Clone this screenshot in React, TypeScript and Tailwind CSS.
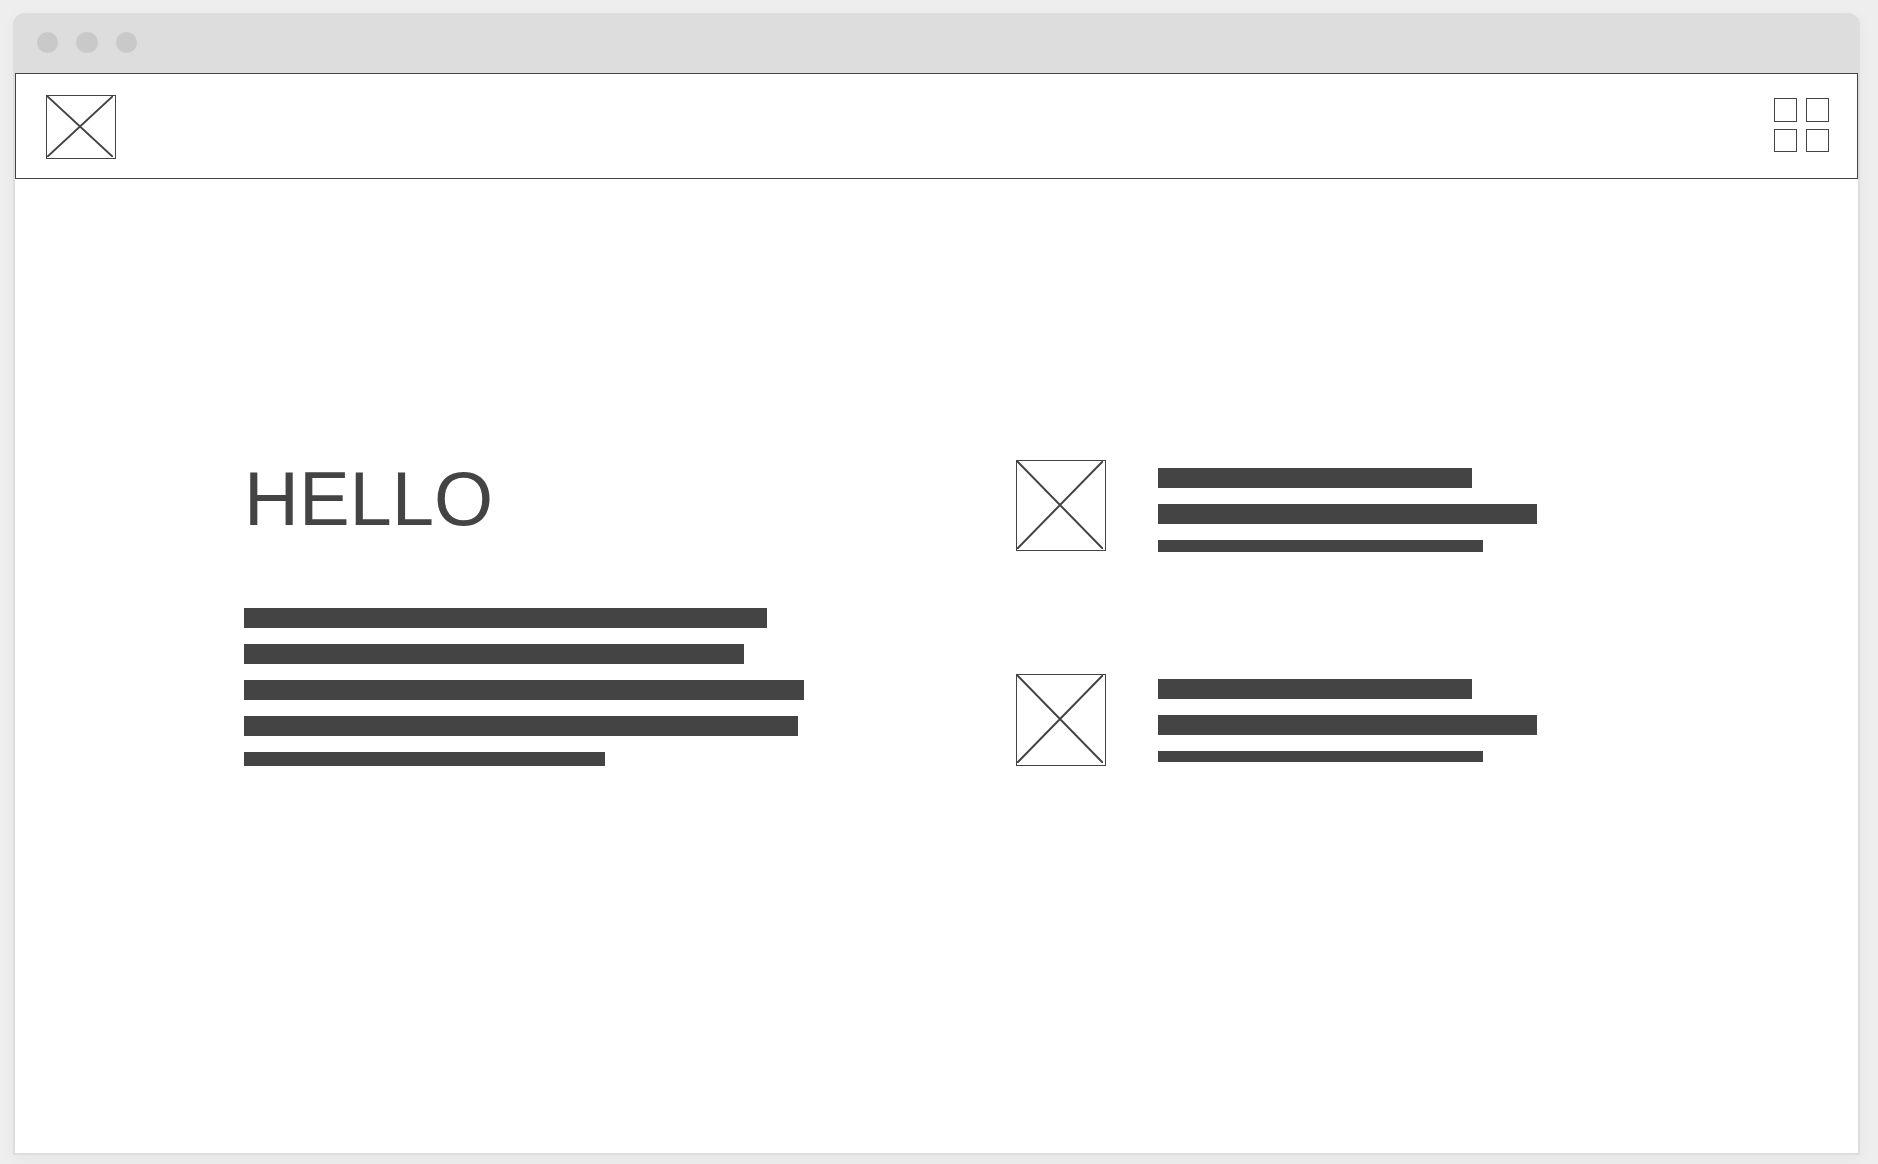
import React from "react";

function CrossBox({ className, label }: { className: string; label: string }) {
  return (
    <div role="img" aria-label={label} className={`shrink-0 border border-[#444444] pr-[2px] ${className}`}>
      <svg className="block h-full w-full" viewBox="0 0 100 100" preserveAspectRatio="none" aria-hidden="true">
        <path
          d="M0 0L100 100M100 0L0 100"
          stroke="#444444"
          strokeWidth="2"
          fill="none"
          vectorEffect="non-scaling-stroke"
        />
      </svg>
    </div>
  );
}

function Bar({ className }: { className: string }) {
  return <div className={`max-w-full bg-[#444444] ${className}`} />;
}

function Feature({ label, boxClass, linesClass, lastClass }: { label: string; boxClass: string; linesClass: string; lastClass: string }) {
  return (
    <article className="flex items-start gap-[52px]">
      <CrossBox label={label} className={`w-[90px] ${boxClass}`} />
      <div className={`flex min-w-0 flex-1 flex-col gap-4 ${linesClass}`}>
        <Bar className="h-5 w-[314px]" />
        <Bar className="h-5 w-[379px]" />
        <Bar className={`w-[325px] ${lastClass}`} />
      </div>
    </article>
  );
}

export default function App() {
  return (
    <div className="flex min-h-screen bg-[#eeeeee] pt-[13px] pr-[18px] pb-[9px] pl-[13px] font-['Liberation_Sans',Arial,sans-serif] text-[#444444]">
      <div className="flex flex-1 flex-col rounded-t-xl bg-[#dddddd] px-[2px] pb-[2px] shadow-[0_4px_16px_rgba(0,0,0,0.04)]">
        <div className="flex h-[60px] items-start gap-[18px] px-[22px] pt-[19px]">
          <span className="h-[21px] w-[21px] rounded-full bg-[#c9c9c9]" />
          <span className="h-[21px] w-[22px] rounded-full bg-[#c9c9c9]" />
          <span className="h-[21px] w-[21px] rounded-full bg-[#c9c9c9]" />
        </div>
        <header className="flex h-[106px] items-start justify-between border border-[#444444] bg-white pt-[21px] pr-[28px] pl-[30px]">
          <CrossBox label="Logo" className="h-16 w-[70px] pb-px" />
          <button type="button" aria-label="Menu" className="mt-[3px] grid grid-cols-2 gap-x-[9px] gap-y-[7px]">
            <span className="h-6 w-[23px] border border-[#444444]" />
            <span className="h-6 w-[23px] border border-[#444444]" />
            <span className="h-[23px] w-[23px] border border-[#444444]" />
            <span className="h-[23px] w-[23px] border border-[#444444]" />
          </button>
        </header>
        <main className="grid flex-1 grid-cols-2 content-start gap-[159px] bg-white px-[229px] pt-[281px]">
          <section>
            <h1 className="text-[76px] leading-[78px]">HELLO</h1>
            <div className="mt-[70px] flex flex-col gap-4">
              <Bar className="h-5 w-[523px]" />
              <Bar className="h-5 w-[500px]" />
              <Bar className="h-5 w-[560px]" />
              <Bar className="h-5 w-[554px]" />
              <Bar className="h-[14px] w-[361px]" />
            </div>
          </section>
          <section className="flex flex-col gap-[122px]">
            <Feature label="First item" boxClass="h-[91px] pb-px" linesClass="pt-2" lastClass="h-3" />
            <Feature label="Second item" boxClass="h-[92px] pb-[2px]" linesClass="pt-[5px]" lastClass="h-[11px]" />
          </section>
        </main>
      </div>
    </div>
  );
}
